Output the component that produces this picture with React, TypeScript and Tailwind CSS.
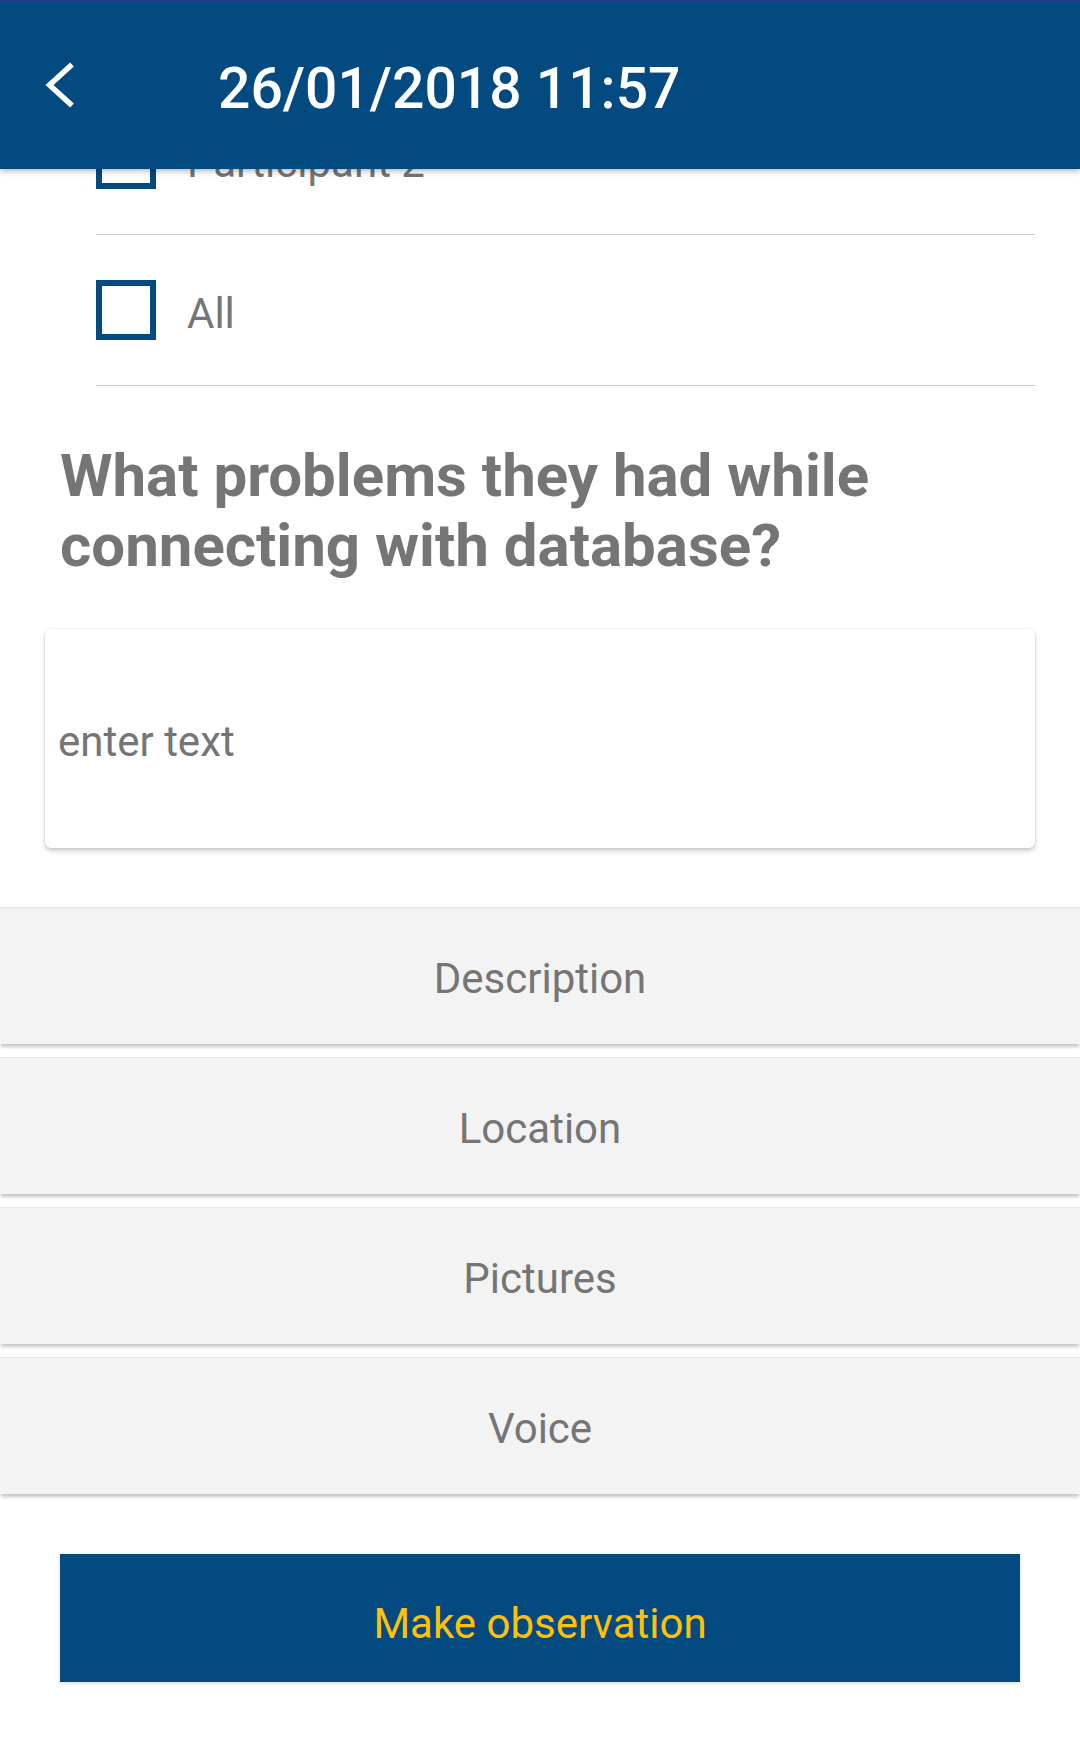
import React from "react";

const font = { fontFamily: "Roboto, 'Noto Sans', sans-serif" };

function Checkbox() {
  return <div className="w-[60px] h-[60px] border-[6px] border-[#024a7f] bg-white shrink-0" />;
}

function CheckRow({ label }: { label: string }) {
  return (
    <div className="ml-[96px] mr-[45px] h-[151px] border-b border-[#cccccc] flex items-center">
      <Checkbox />
      <span className="ml-[31px] mt-[7px] text-[42px] text-[#757575] leading-none">{label}</span>
    </div>
  );
}

function Section({ label }: { label: string }) {
  return (
    <div className="h-[137px] mb-[13px] bg-[#f3f3f3] border-t border-[#e6e6e6] shadow-[0_4px_3px_-1px_rgba(0,0,0,0.22)] flex items-center justify-center pt-[6px]">
      <span className="text-[42px] text-[#757575] leading-none">{label}</span>
    </div>
  );
}

export default function App() {
  return (
    <div className="relative w-[1080px] h-[1738px] bg-white overflow-hidden" style={font}>
      <div className="absolute top-0 left-0 right-0 z-10 h-[169px] bg-[#024a7f] border-t border-[#2a3a8f] shadow-[0_2px_6px_rgba(0,0,0,0.3)] flex items-center pl-[45px]">
        <svg width="30" height="46" viewBox="0 0 30 46" className="shrink-0">
          <path d="M27 2.5 L4.5 23 L27 43.5" fill="none" stroke="white" strokeWidth="5.5" />
        </svg>
        <span className="ml-[143px] text-[57px] font-medium text-white leading-none mt-[6px]">26/01/2018 11:57</span>
      </div>

      <div className="pt-[84px]">
        <CheckRow label="Participant 2" />
        <CheckRow label="All" />

        <h2 className="ml-[60px] mr-[40px] mt-[55px] text-[60px] leading-[70px] font-bold text-[#757575]">
          What problems they had while connecting with database?
        </h2>

        <div className="mx-[45px] mt-[48px] h-[219px] rounded-[6px] bg-white shadow-[0_3px_5px_rgba(0,0,0,0.2),0_0_2px_rgba(0,0,0,0.12)] flex items-center pl-[13px] pt-[6px]">
          <span className="text-[42px] text-[#757575] leading-none">enter text</span>
        </div>

        <div className="mt-[59px]">
          <Section label="Description" />
          <Section label="Location" />
          <Section label="Pictures" />
          <Section label="Voice" />
        </div>

        <div className="mx-[60px] mt-[60px] h-[128px] bg-[#024a7f] shadow-[0_1px_4px_rgba(0,0,0,0.15)] flex items-center justify-center pt-[12px]">
          <span className="text-[42px] text-[#ffc107] leading-none">Make observation</span>
        </div>
      </div>
    </div>
  );
}
